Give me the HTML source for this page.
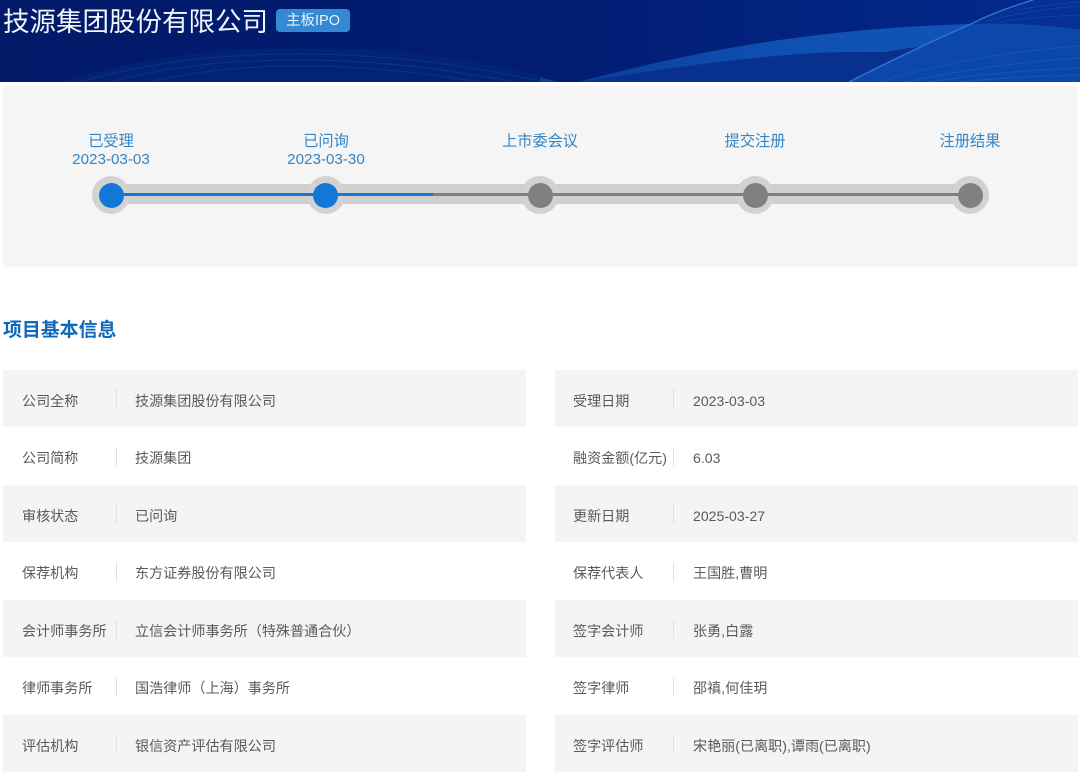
<!DOCTYPE html>
<html lang="zh-CN"><head><meta charset="utf-8"><title>技源集团股份有限公司</title>
<style>
*{box-sizing:border-box}
html,body{margin:0;padding:0;background:#fff}
body{width:1080px;height:774px;overflow:hidden;position:relative;font-family:"Liberation Sans","Noto Sans CJK SC",sans-serif}
.a{position:absolute;white-space:nowrap}
.hero{left:0;top:0;width:1080px;height:82px;display:block}
.title{left:3px;top:3px;font-size:26.5px;line-height:38px;color:#f2f6fc}
.tag{left:276px;top:9px;width:74px;height:23px;background:#3389d2;border-radius:4px;color:#e8f3fb;font-size:14.5px;line-height:24px;text-align:center}
.panel{left:3px;top:86px;width:1075px;height:181px;background:#f5f5f5}
.st{width:160px;text-align:center;color:#3585c4;font-size:15.2px;line-height:18px;top:133px}
.track{left:111px;top:184px;width:859px;height:20px;background:#cfcfcf}
.line{top:193px;height:3px}
.o{width:38px;height:38px;border-radius:50%;background:#d2d2d2;top:176px}
.i{width:25px;height:25px;border-radius:50%;top:182.5px}
.h{left:3px;top:318px;font-size:18.9px;line-height:26px;font-weight:700;color:#0f68b8}
.row{height:57px;background:#f5f4f2}
.t{font-size:14.1px;line-height:20px;color:#5a5a5a}
.d{width:1px;height:20px;background:#e2e2e2}
</style></head><body>
<svg class="a hero" viewBox="0 0 1080 82" xmlns="http://www.w3.org/2000/svg">
<defs>
<linearGradient id="g" x1="0" x2="1" y1="0" y2="0"><stop offset="0" stop-color="#021a68"/><stop offset=".5" stop-color="#011c72"/><stop offset="1" stop-color="#032a8c"/></linearGradient>
<linearGradient id="w" x1="0" x2="1" y1="0" y2="0"><stop offset="0" stop-color="#0b3f9c"/><stop offset=".4" stop-color="#0f50b2"/><stop offset="1" stop-color="#1156bc"/></linearGradient>
</defs>
<rect width="1080" height="82" fill="url(#g)"/>
<path d="M62 82C130 60 210 48 300 48C400 48 480 60 540 76V82Z" fill="#06297f" opacity=".55"/>
<g fill="none" stroke="#2a5fb0" stroke-width=".7" opacity=".35">
<path d="M80 82C150 62 220 54 300 54C390 54 470 66 535 80"/>
<path d="M110 82C170 66 230 60 300 60C380 60 450 70 515 82"/>
<path d="M150 82C200 70 250 66 300 66C370 66 430 74 480 82"/>
</g>
<path d="M540 77L558 82H540Z" fill="#0a3f9f"/>
<path d="M578 82C640 66 700 52 760 43C830 32 900 26 971 24C1020 23 1055 26 1080 30V82Z" fill="#07308f"/>
<path d="M971 24C990 14 1010 7 1033 0H1080V30C1055 26 1020 23 971 24Z" fill="#063095"/>
<g fill="none" stroke="#1a55b5" stroke-width=".8" opacity=".55">
<path d="M985 22C1010 14 1050 8 1080 6"/><path d="M1000 22C1025 18 1055 16 1080 15"/><path d="M1018 10C1040 6 1060 3 1080 2"/>
</g>
<path d="M578 82C640 66 700 52 760 43C830 32 900 26 971 24C1020 23 1055 26 1080 30V50C1040 40 960 38 885 52C860 52 830 52 816 53C760 56 680 66 578 82Z" fill="url(#w)"/>
<path d="M849 82C880 66 930 42 971 24C1020 23 1055 26 1080 30V82Z" fill="#0c48ac"/>
<g fill="none" stroke="#2a68c8" stroke-width=".8" opacity=".5">
<path d="M880 82C930 66 1000 52 1080 46"/><path d="M905 82C960 70 1020 62 1080 58"/><path d="M930 82C980 74 1030 70 1080 68"/><path d="M960 82C1000 78 1040 76 1080 75"/>
</g>
<path d="M849 82C880 66 930 42 971 24C990 14 1010 7 1033 0" fill="none" stroke="#2f75d2" stroke-width="1.4"/>
</svg>
<div class="a title">技源集团股份有限公司</div>
<div class="a tag">主板IPO</div>

<div class="a panel"></div>
<div class="a st" style="left:31px">已受理<br>2023-03-03</div>
<div class="a st" style="left:246px">已问询<br>2023-03-30</div>
<div class="a st" style="left:460px">上市委会议</div>
<div class="a st" style="left:675px">提交注册</div>
<div class="a st" style="left:890px">注册结果</div>
<div class="a track"></div>
<div class="a o" style="left:92px"></div>
<div class="a o" style="left:306.5px"></div>
<div class="a o" style="left:521px"></div>
<div class="a o" style="left:736px"></div>
<div class="a o" style="left:951px"></div>
<div class="a line" style="left:111px;width:322px;background:#1479d4"></div>
<div class="a line" style="left:433px;width:537px;background:#7f7f7f"></div>
<div class="a i" style="left:98.5px;background:#1278d8"></div>
<div class="a i" style="left:313px;background:#1278d8"></div>
<div class="a i" style="left:527.5px;background:#808080"></div>
<div class="a i" style="left:742.5px;background:#808080"></div>
<div class="a i" style="left:957.5px;background:#808080"></div>

<div class="a h">项目基本信息</div>

<div class="a row" style="left:3px;top:370px;width:523px"></div>
<div class="a row" style="left:3px;top:485px;width:523px"></div>
<div class="a row" style="left:3px;top:600px;width:523px"></div>
<div class="a row" style="left:3px;top:715px;width:523px"></div>
<div class="a row" style="left:555px;top:370px;width:523px"></div>
<div class="a row" style="left:555px;top:485px;width:523px"></div>
<div class="a row" style="left:555px;top:600px;width:523px"></div>
<div class="a row" style="left:555px;top:715px;width:523px"></div>

<div class="a d" style="left:116px;top:389px"></div><div class="a d" style="left:116px;top:447px"></div><div class="a d" style="left:116px;top:504px"></div><div class="a d" style="left:116px;top:562px"></div><div class="a d" style="left:116px;top:619px"></div><div class="a d" style="left:116px;top:677px"></div><div class="a d" style="left:116px;top:734px"></div>
<div class="a d" style="left:673px;top:389px"></div><div class="a d" style="left:673px;top:447px"></div><div class="a d" style="left:673px;top:504px"></div><div class="a d" style="left:673px;top:562px"></div><div class="a d" style="left:673px;top:619px"></div><div class="a d" style="left:673px;top:677px"></div><div class="a d" style="left:673px;top:734px"></div>

<div class="a t" style="left:22px;top:391px">公司全称</div><div class="a t" style="left:135px;top:391px">技源集团股份有限公司</div>
<div class="a t" style="left:22px;top:448px">公司简称</div><div class="a t" style="left:135px;top:448px">技源集团</div>
<div class="a t" style="left:22px;top:506px">审核状态</div><div class="a t" style="left:135px;top:506px">已问询</div>
<div class="a t" style="left:22px;top:563px">保荐机构</div><div class="a t" style="left:135px;top:563px">东方证券股份有限公司</div>
<div class="a t" style="left:22px;top:621px">会计师事务所</div><div class="a t" style="left:135px;top:621px">立信会计师事务所（特殊普通合伙）</div>
<div class="a t" style="left:22px;top:678px">律师事务所</div><div class="a t" style="left:135px;top:678px">国浩律师（上海）事务所</div>
<div class="a t" style="left:22px;top:736px">评估机构</div><div class="a t" style="left:135px;top:736px">银信资产评估有限公司</div>

<div class="a t" style="left:573px;top:391px">受理日期</div><div class="a t" style="left:693px;top:391px">2023-03-03</div>
<div class="a t" style="left:573px;top:448px">融资金额(亿元)</div><div class="a t" style="left:693px;top:448px">6.03</div>
<div class="a t" style="left:573px;top:506px">更新日期</div><div class="a t" style="left:693px;top:506px">2025-03-27</div>
<div class="a t" style="left:573px;top:563px">保荐代表人</div><div class="a t" style="left:693px;top:563px">王国胜,曹明</div>
<div class="a t" style="left:573px;top:621px">签字会计师</div><div class="a t" style="left:693px;top:621px">张勇,白露</div>
<div class="a t" style="left:573px;top:678px">签字律师</div><div class="a t" style="left:693px;top:678px">邵禛,何佳玥</div>
<div class="a t" style="left:573px;top:736px">签字评估师</div><div class="a t" style="left:693px;top:736px">宋艳丽(已离职),谭雨(已离职)</div>
</body></html>
